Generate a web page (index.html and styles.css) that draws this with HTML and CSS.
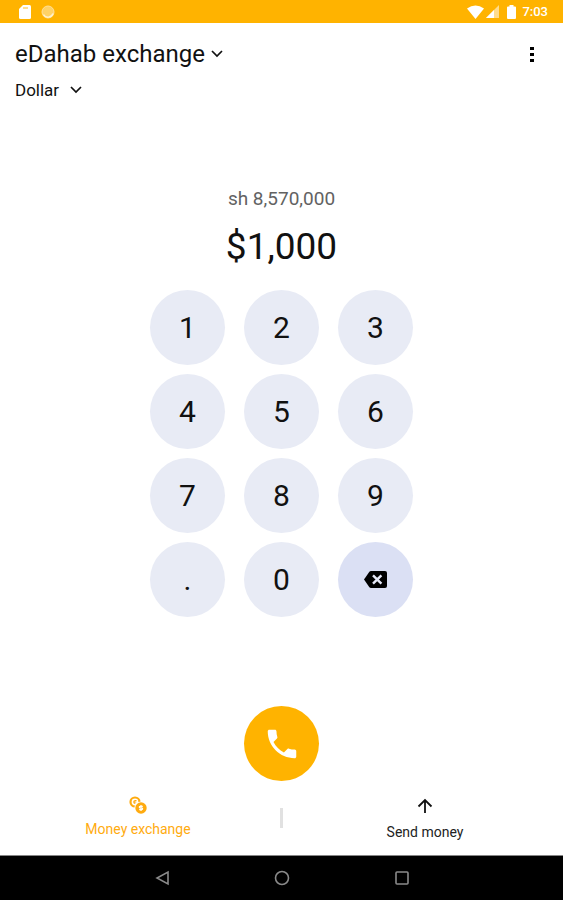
FILE: index.html
```html
<!DOCTYPE html>
<html lang="en">
<head>
<meta charset="utf-8">
<meta name="viewport" content="width=device-width, initial-scale=1">
<title>eDahab exchange</title>
<link rel="stylesheet" href="styles.css">
</head>
<body>
<div class="status">
  <div class="status-group status-left">
    <svg width="12" height="16" viewBox="0 0 12 16"><path fill="#fff" d="M4 1h6.500a1.500 1.500 0 0 1 1.500 1.500v11a1.500 1.500 0 0 1-1.500 1.500h-9A1.500 1.500 0 0 1 0 13.500V5z"/><path fill="#ffdf91" d="M4 3h5v2H4z"/></svg>
    <svg width="14" height="14" viewBox="0 0 14 14"><circle cx="7" cy="7" r="6" fill="#ffd266" stroke="#ffe09a"/><path fill="none" stroke="#fff1cd" stroke-width="1.500" d="M2.500 9.500a5.200 5.200 0 0 0 9.500-1"/></svg>
  </div>
  <div class="status-group">
    <svg width="17" height="14" viewBox="0 0 17 14"><path fill="#fff" d="M0 3.500Q8.500-2.500 17 3.500L8.500 14z"/></svg>
    <svg width="13" height="13" viewBox="0 0 13 13"><path fill="#ffdc8c" d="M13 0v13H0z"/><path fill="#fff" d="M8 5v8H0z"/></svg>
    <svg class="battery" width="9" height="14" viewBox="0 0 9 14"><path fill="#fff" d="M2.500 0h4v1.500H8a1 1 0 0 1 1 1V13a1 1 0 0 1-1 1H1a1 1 0 0 1-1-1V2.500a1 1 0 0 1 1-1h1.500z"/></svg>
    <span class="clock">7:03</span>
  </div>
</div>

<header class="header">
  <div class="header-row">
    <div class="picker picker-title">
      <select class="select title" aria-label="Service"><option>eDahab exchange</option></select>
      <svg class="chevron" width="12" height="8" viewBox="0 0 12 8"><path d="M1 1l5 5 5-5"/></svg>
    </div>
    <button class="more" aria-label="More options"><svg width="4" height="16" viewBox="0 0 4 16"><path d="M0 1h4v3H0zM0 7h4v3H0zM0 13h4v3H0z"/></svg></button>
  </div>
  <div class="picker">
    <select class="select currency" aria-label="Currency"><option>Dollar</option></select>
    <svg class="chevron" width="12" height="8" viewBox="0 0 12 8"><path d="M1 1l5 5 5-5"/></svg>
  </div>
</header>

<main class="main">
  <div class="converted">sh 8,570,000</div>
  <div class="amount">$1,000</div>
  <div class="keypad">
    <button class="key">1</button><button class="key">2</button><button class="key">3</button>
    <button class="key">4</button><button class="key">5</button><button class="key">6</button>
    <button class="key">7</button><button class="key">8</button><button class="key">9</button>
    <button class="key">.</button><button class="key">0</button>
    <button class="key key-delete" aria-label="Delete"><svg width="23" height="17" viewBox="0 0 23 17"><path d="M7 0h14a2 2 0 0 1 2 2v13a2 2 0 0 1-2 2H7q-1 0-1.600-.8L0 8.500 5.400.8Q6 0 7 0z"/><path fill="none" stroke="#e6e9f8" stroke-width="2.400" d="M9 4.300l8.400 8.400m0-8.400l-8.400 8.400"/></svg></button>
  </div>
</main>

<button class="call" aria-label="Call"><svg width="38" height="38" viewBox="0 0 24 24"><path fill="#fff" d="M6.620 10.790c1.440 2.830 3.760 5.140 6.590 6.590l2.200-2.200c.270-.270.670-.360 1.020-.240 1.120.370 2.330.570 3.570.570.550 0 1 .450 1 1V20c0 .550-.450 1-1 1-9.390 0-17-7.610-17-17 0-.550.450-1 1-1h3.500c.550 0 1 .450 1 1 0 1.250.200 2.450.570 3.570.110.350.030.740-.250 1.020z"/></svg></button>

<nav class="tabs">
  <a class="tab tab-active" href="#exchange">
    <svg width="18" height="18" viewBox="0 0 18 18"><circle cx="6" cy="6" r="4.500" fill="none" stroke="#ffab0f" stroke-width="2.200"/><path fill="none" stroke="#ffab0f" stroke-width="1.200" d="M7.500 4.500H6.300a1.500 1.500 0 0 0 0 3M4.300 6h3"/><circle cx="12" cy="12" r="6.500" fill="#fff"/><circle cx="12" cy="12" r="5.700" fill="#ffab0f"/><path fill="none" stroke="#fff" stroke-width="1.200" d="M13.800 10.300h-2.600a.85.85 0 0 0 0 1.700h1.600a.85.85 0 0 1 0 1.700h-2.600M12 9v6"/></svg>
    <span>Money exchange</span>
  </a>
  <span class="divider"></span>
  <a class="tab tab-send" href="#send">
    <svg width="16" height="16" viewBox="0 0 16 16"><path fill="none" stroke="#111" stroke-width="1.800" d="M8 15V2M1.500 8.500L8 2l6.500 6.500"/></svg>
    <span>Send money</span>
  </a>
</nav>

<footer class="system">
  <button class="system-key" aria-label="Back"><svg width="16" height="16" viewBox="0 0 16 16"><path d="M14 2v12L3 8z"/></svg></button>
  <button class="system-key" aria-label="Home"><svg width="16" height="16" viewBox="0 0 16 16"><circle cx="8" cy="8" r="6.500"/></svg></button>
  <button class="system-key" aria-label="Recent apps"><svg width="16" height="16" viewBox="0 0 16 16"><rect x="2" y="2" width="12" height="12" rx="1"/></svg></button>
</footer>
</body>
</html>
```
FILE: styles.css
```css
* { box-sizing: border-box; }

body {
  margin: 0;
  min-height: 100vh;
  display: flex;
  flex-direction: column;
  background: #fff;
  color: #111;
  font-family: Roboto, "Liberation Sans", sans-serif;
}

svg { display: block; flex: none; }
button, select {
  appearance: none;
  border: 0;
  padding: 0;
  margin: 0;
  background: none;
  color: inherit;
  font: inherit;
  cursor: pointer;
}

.status {
  height: 23px;
  display: flex;
  justify-content: space-between;
  align-items: center;
  padding: 0 15px 0 19px;
  background: #ffb300;
  color: #fff;
}
.status-group { display: flex; align-items: center; gap: 2px; }
.status-left { gap: 10px; }
.battery { margin: 0 4px 0 6px; }
.clock { font-size: 13px; font-weight: 500; line-height: 16px; }

.header { padding: 15px 15px 0; }
.header-row { display: flex; justify-content: space-between; align-items: center; }
.picker { display: flex; align-items: center; gap: 10px; }
.picker-title { gap: 6px; }
.select { line-height: 32px; height: 32px; }
.title { font-size: 24px; }
.currency { font-size: 17px; height: 40px; line-height: 40px; }
.chevron { fill: none; stroke: #111; stroke-width: 1.7; }
.more { width: 32px; height: 32px; display: grid; place-items: center; }

.main {
  flex: 1;
  display: flex;
  flex-direction: column;
  align-items: center;
  padding-top: 77px;
}
.converted { font-size: 19px; line-height: 24px; color: #626262; }
.amount { font-size: 37px; line-height: 48px; padding: 12px 0 19px; }
.keypad { display: grid; grid-template-columns: repeat(3, 75px); gap: 9px 19px; }
.key {
  height: 75px;
  border-radius: 50%;
  background: #e8ebf5;
  font-size: 30px;
  display: grid;
  place-items: center;
}
.key-delete { background: #dbe0f4; }

.call {
  width: 75px;
  height: 75px;
  margin: 24px auto 15px;
  border-radius: 50%;
  background: #ffb300;
  display: grid;
  place-items: center;
}

.tabs { display: flex; padding-bottom: 13px; }
.tab {
  flex: 1;
  display: flex;
  flex-direction: column;
  align-items: center;
  gap: 4px;
  font-size: 14px;
  line-height: 20px;
  color: #222;
  text-decoration: none;
}
.tab-active { gap: 5px; color: #ffab0f; }
.tab-send { gap: 8px; padding-top: 2px; }
.divider { width: 3px; height: 20px; margin: 12px 4px 0; background: #e1e1e1; }

.system {
  height: 45px;
  display: flex;
  justify-content: center;
  align-items: center;
  gap: 104px;
  background: #000;
  border-top: 1px solid #858585;
}
.system-key svg { fill: none; stroke: #8a8a8a; stroke-width: 1.6; }
```
